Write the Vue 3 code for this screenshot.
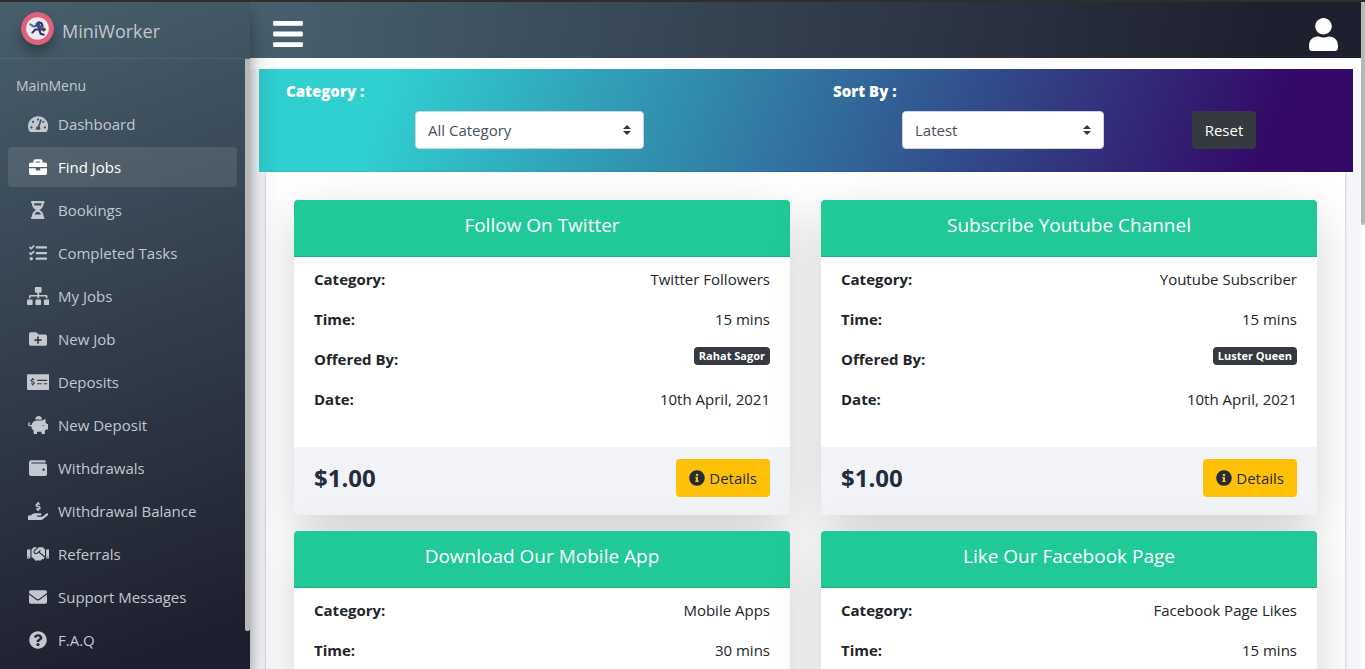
<script setup>
import { ref } from 'vue'

const icons = {
  dashboard: { w: 576, d: 'M288 32C128.94 32 0 160.94 0 320c0 52.8 14.25 102.26 39.06 144.8 5.61 9.62 16.3 15.2 27.44 15.2h443c11.14 0 21.83-5.58 27.44-15.2C561.75 422.26 576 372.8 576 320c0-159.06-128.94-288-288-288zm0 64c14.71 0 26.58 10.13 30.32 23.65-1.11 2.26-2.64 4.23-3.45 6.67l-9.22 27.67c-5.13 3.49-10.97 6.01-17.64 6.01-17.67 0-32-14.33-32-32S270.33 96 288 96zM96 384c-17.67 0-32-14.33-32-32s14.33-32 32-32 32 14.33 32 32-14.33 32-32 32zm48-160c-17.67 0-32-14.33-32-32s14.33-32 32-32 32 14.33 32 32-14.33 32-32 32zm246.77-72.41l-61.33 184C343.13 347.33 352 364.54 352 384c0 11.72-3.38 22.55-8.88 32H232.88c-5.5-9.45-8.88-20.28-8.88-32 0-33.94 26.5-61.43 59.9-63.59l61.34-184.01c4.17-12.56 17.73-19.45 30.36-15.17 12.57 4.19 19.35 17.79 15.17 30.36zm14.66 57.2l15.52-46.55c3.47-1.29 7.13-2.23 11.05-2.23 17.67 0 32 14.33 32 32s-14.33 32-32 32c-11.38-.01-20.89-6.28-26.57-15.22zM480 384c-17.67 0-32-14.33-32-32s14.33-32 32-32 32 14.33 32 32-14.33 32-32 32z' },
  briefcase: { w: 512, d: 'M320 336c0 8.84-7.16 16-16 16h-96c-8.84 0-16-7.16-16-16v-48H0v144c0 25.6 22.4 48 48 48h416c25.6 0 48-22.4 48-48V288H320v48zm144-208h-80V80c0-25.6-22.4-48-48-48H176c-25.6 0-48 22.4-48 48v48H48c-25.6 0-48 22.4-48 48v80h512v-80c0-25.6-22.4-48-48-48zm-144 0H192V96h128v32z' },
  hourglass: { w: 384, d: 'M360 0H24C10.745 0 0 10.745 0 24v16c0 13.255 10.745 24 24 24 0 90.965 51.016 167.734 120.842 192C75.016 280.266 24 357.035 24 448c-13.255 0-24 10.745-24 24v16c0 13.255 10.745 24 24 24h336c13.255 0 24-10.745 24-24v-16c0-13.255-10.745-24-24-24 0-90.965-51.016-167.734-120.842-192C308.984 231.734 360 154.965 360 64c13.255 0 24-10.745 24-24V24c0-13.255-10.745-24-24-24zm-75.078 384H99.08c17.059-46.797 52.096-80 92.92-80 40.821 0 75.862 33.196 92.922 80zm.019-256H99.078C91.988 108.548 88 86.748 88 64h208c0 22.805-3.987 44.587-11.059 64z' },
  tasks: { w: 512, d: 'M139.61 35.5a12 12 0 0 0-17 0L58.93 98.81l-22.7-22.12a12 12 0 0 0-17 0L3.53 92.41a12 12 0 0 0 0 17l47.59 47.4a12.78 12.78 0 0 0 17.61 0l15.59-15.62L156.52 69a12.09 12.09 0 0 0 .09-17zm0 159.19a12 12 0 0 0-17 0l-63.68 63.72-22.7-22.1a12 12 0 0 0-17 0L3.53 252a12 12 0 0 0 0 17L51 316.5a12.77 12.77 0 0 0 17.6 0l15.7-15.69 72.2-72.22a12 12 0 0 0 .09-16.9zM64 368c-26.49 0-48.59 21.5-48.59 48S37.53 464 64 464a48 48 0 0 0 0-96zm432 16H208a16 16 0 0 0-16 16v32a16 16 0 0 0 16 16h288a16 16 0 0 0 16-16v-32a16 16 0 0 0-16-16zm0-320H208a16 16 0 0 0-16 16v32a16 16 0 0 0 16 16h288a16 16 0 0 0 16-16V80a16 16 0 0 0-16-16zm0 160H208a16 16 0 0 0-16 16v32a16 16 0 0 0 16 16h288a16 16 0 0 0 16-16v-32a16 16 0 0 0-16-16z' },
  sitemap: { w: 640, d: 'M128 352H32c-17.67 0-32 14.33-32 32v96c0 17.67 14.33 32 32 32h96c17.67 0 32-14.33 32-32v-96c0-17.67-14.33-32-32-32zm-24-80h192v48h48v-48h192v48h48v-57.59c0-21.17-17.23-38.41-38.41-38.41H344v-64h40c17.67 0 32-14.33 32-32V32c0-17.67-14.33-32-32-32H256c-17.67 0-32 14.33-32 32v96c0 17.67 14.33 32 32 32h40v64H94.41C73.23 224 56 241.23 56 262.41V320h48v-48zm264 80h-96c-17.67 0-32 14.33-32 32v96c0 17.67 14.33 32 32 32h96c17.67 0 32-14.33 32-32v-96c0-17.67-14.33-32-32-32zm240 0h-96c-17.67 0-32 14.33-32 32v96c0 17.67 14.33 32 32 32h96c17.67 0 32-14.33 32-32v-96c0-17.67-14.33-32-32-32z' },
  folderPlus: { w: 512, d: 'M464,128H272L208,64H48A48,48,0,0,0,0,112V400a48,48,0,0,0,48,48H464a48,48,0,0,0,48-48V176A48,48,0,0,0,464,128ZM359.5,296a16,16,0,0,1-16,16h-64v64a16,16,0,0,1-16,16h-16a16,16,0,0,1-16-16V312h-64a16,16,0,0,1-16-16V280a16,16,0,0,1,16-16h64V200a16,16,0,0,1,16-16h16a16,16,0,0,1,16,16v64h64a16,16,0,0,1,16,16Z' },
  moneyCheck: { w: 640, d: 'M608 32H32C14.33 32 0 46.33 0 64v384c0 17.67 14.33 32 32 32h576c17.67 0 32-14.33 32-32V64c0-17.67-14.33-32-32-32zM176 327.88V344c0 4.42-3.58 8-8 8h-16c-4.42 0-8-3.58-8-8v-16.29c-11.29-.58-22.27-4.52-31.37-11.35-3.9-2.93-4.1-8.77-.57-12.14l11.75-11.21c2.77-2.64 6.89-2.76 10.13-.73 3.87 2.42 8.26 3.72 12.82 3.72h28.11c6.5 0 11.8-5.92 11.8-13.19 0-5.95-3.61-11.19-8.77-12.73l-45-13.5c-18.59-5.58-31.58-23.42-31.58-43.39 0-24.52 19.05-44.44 42.67-45.07V152c0-4.42 3.58-8 8-8h16c4.42 0 8 3.58 8 8v16.29c11.29.58 22.27 4.51 31.37 11.35 3.9 2.93 4.1 8.77.57 12.14l-11.75 11.21c-2.77 2.64-6.89 2.76-10.13.73-3.87-2.43-8.26-3.72-12.82-3.72h-28.11c-6.5 0-11.8 5.92-11.8 13.19 0 5.95 3.61 11.19 8.77 12.73l45 13.5c18.59 5.58 31.58 23.42 31.58 43.39 0 24.53-19.05 44.44-42.67 45.07zM416 312c0 4.42-3.58 8-8 8H296c-4.42 0-8-3.58-8-8v-16c0-4.42 3.58-8 8-8h112c4.42 0 8 3.58 8 8v16zm160 0c0 4.42-3.58 8-8 8h-80c-4.42 0-8-3.58-8-8v-16c0-4.42 3.58-8 8-8h80c4.42 0 8 3.58 8 8v16zm0-96c0 4.42-3.58 8-8 8H296c-4.42 0-8-3.58-8-8v-16c0-4.42 3.58-8 8-8h272c4.42 0 8 3.58 8 8v16z' },
  piggyBank: { w: 576, d: 'M560 224h-29.5c-8.8-20-21.6-37.7-37.4-52.5L512 96h-32c-29.4 0-55.4 13.5-73 34.3-7.6-1.1-15.1-2.3-23-2.3H256c-77.4 0-141.9 55-156.8 128H56c-14.8 0-26.5-13.5-23.5-28.8C34.7 215.8 45.4 208 57 208h1c3.3 0 6-2.7 6-6v-20c0-3.3-2.7-6-6-6-28.5 0-53.9 20.4-57.5 48.6C-3.9 258.8 22.7 288 56 288h40c0 52.2 25.4 98.1 64 127.3V496c0 8.8 7.2 16 16 16h64c8.8 0 16-7.2 16-16v-48h128v48c0 8.8 7.2 16 16 16h64c8.8 0 16-7.2 16-16v-80.7c11.8-8.9 22.3-19.4 31.3-31.3H560c8.8 0 16-7.2 16-16V240c0-8.8-7.2-16-16-16zm-128 64c-8.8 0-16-7.2-16-16s7.2-16 16-16 16 7.2 16 16-7.2 16-16 16zM256 96h128c5.4 0 10.7.4 15.9.8 0-.3.1-.5.1-.8 0-53-43-96-96-96s-96 43-96 96c0 2.1.5 4.1.6 6.2 15.2-3.9 31-6.2 47.4-6.2z' },
  wallet: { w: 512, d: 'M461.2 128H80c-8.84 0-16-7.16-16-16s7.16-16 16-16h384c8.84 0 16-7.16 16-16 0-26.51-21.49-48-48-48H64C28.65 32 0 60.65 0 96v320c0 35.35 28.65 64 64 64h397.2c28.02 0 50.8-21.53 50.8-48V176c0-26.47-22.78-48-50.8-48zM416 336c-17.67 0-32-14.33-32-32s14.33-32 32-32 32 14.33 32 32-14.33 32-32 32z' },
  handDollar: { w: 576, d: 'M257.6,144.3l50,14.3c3.6,1,6.1,4.4,6.1,8.1c0,4.6-3.8,8.4-8.4,8.4h-32.8c-3.6,0-7.1-0.8-10.3-2.2c-4.8-2.2-10.4-1.7-14.1,2l-17.5,17.5c-5.3,5.3-4.7,14.3,1.5,18.4c9.5,6.3,20.4,10.1,31.8,11.5V240c0,8.8,7.2,16,16,16h16c8.8,0,16-7.2,16-16v-17.6c30.3-3.6,53.3-31,49.3-63c-2.9-23-20.7-41.3-42.9-47.7l-50-14.3c-3.6-1-6.1-4.4-6.1-8.1c0-4.6,3.8-8.4,8.4-8.4h32.8c3.6,0,7.1,0.8,10.3,2.2c4.8,2.2,10.4,1.7,14.1-2l17.5-17.5c5.3-5.3,4.7-14.3-1.5-18.4c-9.5-6.3-20.4-10.1-31.8-11.5V16c0-8.8-7.2-16-16-16h-16c-8.8,0-16,7.2-16,16v17.6c-30.3,3.6-53.3,31-49.3,63C217.6,119.6,235.4,137.9,257.6,144.3zM565.3 328.1c-11.8-10.7-30.2-10-42.6 0L430.3 402c-11.3 9.1-25.4 14-40 14H272c-8.8 0-16-7.2-16-16s7.2-16 16-16h78.3c15.9 0 30.7-10.9 33.3-26.6 3.3-20-12.1-37.4-31.6-37.4H192c-27 0-53.1 9.3-74.1 26.3L71.4 384H16c-8.8 0-16 7.2-16 16v96c0 8.8 7.2 16 16 16h356.8c14.5 0 28.6-4.9 40-14L564 377c15.2-12.1 16.4-35.3 1.3-48.9z' },
  handshake: { w: 640, d: 'M434.7 64h-85.9c-8 0-15.7 3-21.6 8.4l-98.3 90c-.1.1-.2.3-.3.4-16.6 15.6-16.3 40.5-2.1 56 12.7 13.9 39.4 17.6 56.1 2.7.1-.1.3-.1.4-.2l79.9-73.2c6.5-5.9 16.7-5.5 22.6 1 6 6.5 5.5 16.6-1 22.6l-26.1 23.9L504 313.8c2.9 2.4 5.5 5 7.9 7.7V128l-54.6-54.6c-5.9-6-14.1-9.4-22.6-9.4zM544 128.2v223.9c0 17.7 14.3 32 32 32h64V128.2h-96zm48 223.9c-8.8 0-16-7.2-16-16s7.2-16 16-16 16 7.2 16 16-7.2 16-16 16zM0 384h64c17.7 0 32-14.3 32-32V128.2H0V384zm48-63.9c8.8 0 16 7.2 16 16s-7.2 16-16 16-16-7.2-16-16c0-8.9 7.2-16 16-16zm435.9 18.6L334.6 217.5l-30 27.5c-29.7 27.1-75.2 24.5-101.7-4.4-26.9-29.4-24.8-74.9 4.4-101.7L289.1 64h-83.8c-8.5 0-16.6 3.4-22.6 9.4L128 128v223.9h18.3l90.5 81.9c27.4 22.3 67.7 18.1 90-9.3l.2-.2 17.9 15.5c15.9 13 39.4 10.5 52.3-5.4l31.4-38.6 5.4 4.4c13.7 11.1 33.9 9.1 45-4.7l9.5-11.7c11.2-13.8 9.1-33.9-4.6-45.1z' },
  envelope: { w: 512, d: 'M502.3 190.8c3.9-3.1 9.7-.2 9.7 4.7V400c0 26.5-21.5 48-48 48H48c-26.5 0-48-21.5-48-48V195.6c0-5 5.7-7.8 9.7-4.7 22.4 17.4 52.1 39.5 154.1 113.6 21.1 15.4 56.7 47.8 92.2 47.6 35.7.3 72-32.8 92.3-47.6 102-74.1 131.6-96.3 154-113.7zM256 320c23.2.4 56.6-29.2 73.4-41.4 132.7-96.3 142.8-104.7 173.4-128.7 5.8-4.5 9.2-11.5 9.2-18.9v-19c0-26.5-21.5-48-48-48H48c-26.5 0-48 21.5-48 48v19c0 7.4 3.4 14.3 9.2 18.9 30.6 23.9 40.7 32.4 173.4 128.7 16.8 12.2 50.2 41.8 73.4 41.4z' },
  question: { w: 512, d: 'M504 256c0 136.997-111.043 248-248 248S8 392.997 8 256C8 119.083 119.043 8 256 8s248 111.083 248 248zM262.655 90c-54.497 0-89.255 22.957-116.549 63.758-3.536 5.286-2.353 12.415 2.715 16.258l34.699 26.31c5.205 3.947 12.621 3.008 16.665-2.122 17.864-22.658 30.113-35.797 57.303-35.797 20.429 0 45.698 13.148 45.698 32.958 0 14.976-12.363 22.667-32.534 33.976C247.128 238.528 216 254.941 216 296v4c0 6.627 5.373 12 12 12h56c6.627 0 12-5.373 12-12v-1.333c0-28.462 83.186-29.647 83.186-106.667 0-58.002-60.165-102-116.531-102zM256 338c-25.365 0-46 20.635-46 46 0 25.364 20.635 46 46 46s46-20.636 46-46c0-25.365-20.635-46-46-46z' },
}

const menu = [
  { label: 'Dashboard', icon: 'dashboard' },
  { label: 'Find Jobs', icon: 'briefcase', active: true },
  { label: 'Bookings', icon: 'hourglass' },
  { label: 'Completed Tasks', icon: 'tasks' },
  { label: 'My Jobs', icon: 'sitemap' },
  { label: 'New Job', icon: 'folderPlus' },
  { label: 'Deposits', icon: 'moneyCheck' },
  { label: 'New Deposit', icon: 'piggyBank' },
  { label: 'Withdrawals', icon: 'wallet' },
  { label: 'Withdrawal Balance', icon: 'handDollar' },
  { label: 'Referrals', icon: 'handshake' },
  { label: 'Support Messages', icon: 'envelope' },
  { label: 'F.A.Q', icon: 'question' },
]

const jobs = [
  { title: 'Follow On Twitter', category: 'Twitter Followers', time: '15 mins', by: 'Rahat Sagor', date: '10th April, 2021', price: '$1.00' },
  { title: 'Subscribe Youtube Channel', category: 'Youtube Subscriber', time: '15 mins', by: 'Luster Queen', date: '10th April, 2021', price: '$1.00' },
  { title: 'Download Our Mobile App', category: 'Mobile Apps', time: '30 mins' },
  { title: 'Like Our Facebook Page', category: 'Facebook Page Likes', time: '15 mins' },
]

const category = ref('All Category')
const sort = ref('Latest')

function reset() {
  category.value = 'All Category'
  sort.value = 'Latest'
}
</script>

<template>
  <div class="app">
    <aside class="sidebar">
      <a href="#" class="brand">
        <svg class="logo" viewBox="0 0 32 32" aria-hidden="true">
          <circle cx="16" cy="16" r="16" fill="#e0607e" />
          <circle cx="16" cy="16" r="11" fill="#eceaf0" />
          <path d="M9 12l3 2 4-1" fill="none" stroke="#2f7f96" stroke-width="2" stroke-linecap="round" stroke-linejoin="round" />
          <path d="M16 12l3 4" stroke="#3b4a8c" stroke-width="4" stroke-linecap="round" />
          <path d="M17 17l-3 0-3 3M18 18l1 3 3 1M17 10l3 1 1 3" fill="none" stroke="#35306b" stroke-width="2" stroke-linecap="round" stroke-linejoin="round" />
          <circle cx="22" cy="17" r="2" fill="#4a4a30" />
        </svg>
        <span>MiniWorker</span>
      </a>
      <nav class="menu" aria-label="Main menu">
        <h2 class="menu-title">MainMenu</h2>
        <ul>
          <li v-for="m in menu" :key="m.label">
            <a href="#" :class="{ active: m.active }">
              <span class="icon">
                <svg :viewBox="`0 0 ${icons[m.icon].w} 512`" aria-hidden="true"><path :d="icons[m.icon].d" /></svg>
              </span>
              <span>{{ m.label }}</span>
            </a>
          </li>
        </ul>
      </nav>
      <div class="side-thumb"></div>
    </aside>

    <div class="page">
      <header class="topbar">
        <button type="button" class="icon-btn" aria-label="Toggle menu">
          <svg class="bars" viewBox="0 0 448 512"><path d="M16 132h416c8.837 0 16-7.163 16-16V76c0-8.837-7.163-16-16-16H16C7.163 60 0 67.163 0 76v40c0 8.837 7.163 16 16 16zm0 160h416c8.837 0 16-7.163 16-16v-40c0-8.837-7.163-16-16-16H16c-8.837 0-16 7.163-16 16v40c0 8.837 7.163 16 16 16zm0 160h416c8.837 0 16-7.163 16-16v-40c0-8.837-7.163-16-16-16H16c-8.837 0-16 7.163-16 16v40c0 8.837 7.163 16 16 16z" /></svg>
        </button>
        <button type="button" class="icon-btn" aria-label="Account">
          <svg class="user" viewBox="0 0 448 512"><path d="M224 256c70.7 0 128-57.3 128-128S294.7 0 224 0 96 57.3 96 128s57.3 128 128 128zm89.6 32h-16.7c-22.2 10.2-46.9 16-72.9 16s-50.6-5.8-72.9-16h-16.7C60.2 288 0 348.2 0 422.4V464c0 26.5 21.5 48 48 48h352c26.5 0 48-21.5 48-48v-41.6c0-74.2-60.2-134.4-134.4-134.4z" /></svg>
        </button>
      </header>

      <main class="content">
        <form class="filters" @submit.prevent>
          <div class="filter">
            <label for="category">Category :</label>
            <div class="fields category-fields">
              <div class="select">
                <select id="category" v-model="category">
                  <option>All Category</option>
                  <option v-for="j in jobs" :key="j.category">{{ j.category }}</option>
                </select>
                <svg viewBox="0 0 8 10" aria-hidden="true"><path d="M4 0l4 4H0zM4 10L0 6h8z" /></svg>
              </div>
            </div>
          </div>
          <div class="filter">
            <label for="sort">Sort By :</label>
            <div class="fields sort-fields">
              <div class="select">
                <select id="sort" v-model="sort">
                  <option>Latest</option>
                  <option>Oldest</option>
                </select>
                <svg viewBox="0 0 8 10" aria-hidden="true"><path d="M4 0l4 4H0zM4 10L0 6h8z" /></svg>
              </div>
              <button type="button" class="reset" @click="reset">Reset</button>
            </div>
          </div>
        </form>

        <section class="panel">
          <article v-for="j in jobs" :key="j.title" class="card">
            <h3>{{ j.title }}</h3>
            <dl>
              <div><dt>Category:</dt><dd>{{ j.category }}</dd></div>
              <div><dt>Time:</dt><dd>{{ j.time }}</dd></div>
              <div v-if="j.by"><dt>Offered By:</dt><dd><span class="badge">{{ j.by }}</span></dd></div>
              <div v-if="j.date"><dt>Date:</dt><dd>{{ j.date }}</dd></div>
            </dl>
            <footer v-if="j.price">
              <strong>{{ j.price }}</strong>
              <a href="#" class="details">
                <svg viewBox="0 0 512 512" aria-hidden="true"><path d="M256 8C119.043 8 8 119.083 8 256c0 136.997 111.043 248 248 248s248-111.003 248-248C504 119.083 392.957 8 256 8zm0 110c23.196 0 42 18.804 42 42s-18.804 42-42 42-42-18.804-42-42 18.804-42 42-42zm56 254c0 6.627-5.373 12-12 12h-88c-6.627 0-12-5.373-12-12v-24c0-6.627 5.373-12 12-12h12v-64h-12c-6.627 0-12-5.373-12-12v-24c0-6.627 5.373-12 12-12h64c6.627 0 12 5.373 12 12v100h12c6.627 0 12 5.373 12 12v24z" /></svg>
                <span>Details</span>
              </a>
            </footer>
          </article>
        </section>
      </main>
    </div>
    <div class="page-rail"><div class="page-thumb"></div></div>
  </div>
</template>

<style>
body {
  margin: 0;
}
</style>

<style scoped>
* {
  box-sizing: border-box;
}

.app {
  display: flex;
  height: 100vh;
  overflow: hidden;
  border-top: 2px solid #2e2e30;
  background: #fff;
  color: #212529;
  font: 400 15px/24px "Open Sans", "Noto Sans", sans-serif;
}

a {
  color: inherit;
  text-decoration: none;
}

/* Sidebar */
.sidebar {
  position: relative;
  z-index: 2;
  flex: 0 0 250px;
  background: linear-gradient(160deg, #485f6c 0%, #1e1f2e 94%);
  box-shadow: 0 14px 28px rgba(0, 0, 0, 0.25), 0 10px 10px rgba(0, 0, 0, 0.22);
  color: #c2c7d0;
}

.brand {
  display: flex;
  gap: 8px;
  height: 57px;
  padding: 10px 16px 0 21px;
  border-bottom: 1px solid rgba(255, 255, 255, 0.08);
  font-size: 18px;
  line-height: 38px;
}

.logo {
  width: 33px;
  height: 33px;
  border-radius: 50%;
  box-shadow: 0 8px 12px rgba(0, 0, 0, 0.3);
}

.menu {
  padding: 15px 13px 0 8px;
}

.menu-title {
  margin: 0;
  padding: 0 8px;
  font-size: 14px;
  font-weight: 400;
  line-height: 24px;
}

.menu ul {
  display: grid;
  gap: 3px;
  margin: 6px 0 0;
  padding: 0;
  list-style: none;
}

.menu a {
  display: flex;
  align-items: center;
  gap: 6px;
  height: 40px;
  padding: 0 16px;
  border-radius: 4px;
}

.menu a.active {
  background: rgba(255, 255, 255, 0.1);
  color: #fff;
}

.icon {
  display: flex;
  justify-content: center;
  width: 28px;
}

.icon svg {
  height: 18px;
  fill: currentColor;
}

.side-thumb {
  position: absolute;
  top: 57px;
  right: 0;
  width: 5px;
  height: 572px;
  border-radius: 0 0 2px 2px;
  background: #b8b8b8;
}

/* Top bar */
.page {
  display: flex;
  flex: 1;
  flex-direction: column;
  min-width: 0;
  background: #f4f6f9;
}

.topbar {
  display: flex;
  flex: none;
  align-items: center;
  justify-content: space-between;
  height: 56px;
  padding: 8px 23px 0;
  background: linear-gradient(100deg, #48616e 0%, #1e1f2e 92%);
}

.icon-btn {
  display: flex;
  padding: 0;
  border: 0;
  background: none;
  color: #fff;
}

.icon-btn svg {
  fill: currentColor;
}

.bars {
  width: 30px;
  height: 34px;
}

.user {
  width: 29px;
  height: 33px;
}

/* Filters */
.content {
  display: flex;
  flex: 1;
  flex-direction: column;
  min-height: 0;
  overflow-y: auto;
  scrollbar-width: none;
}

.filters {
  display: grid;
  flex: none;
  grid-template-columns: 1fr 1fr;
  padding: 0 8px 0 9px;
  border-top: 11px solid #fff;
  background: linear-gradient(110deg, #30cfd0 12%, #330867 92%) content-box;
  color: #fff;
}

.filter {
  padding: 10px 0 23px 27px;
}

.filter label {
  display: block;
  font-weight: 800;
}

.fields {
  display: grid;
  margin-top: 8px;
}

.category-fields {
  grid-template-columns: 129fr 229fr 162fr;
}

.sort-fields {
  grid-template-columns: 69fr 202fr 88fr 64px 97fr;
}

.select {
  position: relative;
  grid-column: 2;
}

.select select {
  width: 100%;
  height: 38px;
  padding: 0 28px 0 12px;
  border: 1px solid #ced4da;
  border-radius: 4px;
  appearance: none;
  background: #fff;
  color: #495057;
  font: inherit;
}

.select svg {
  position: absolute;
  top: 14px;
  right: 13px;
  width: 8px;
  height: 10px;
  fill: #343a40;
  pointer-events: none;
}

.reset {
  grid-column: 4;
  height: 38px;
  padding: 0;
  border: 0;
  border-radius: 4px;
  background: #343a40;
  color: #fff;
  font: inherit;
}

/* Job cards */
.panel {
  display: grid;
  flex: 1 0 auto;
  grid-template-columns: 1fr 1fr;
  align-content: start;
  gap: 16px 31px;
  margin: 0 16px;
  padding: 28px;
  overflow: hidden;
  background: #fff;
  box-shadow: 0 0 1px rgba(0, 0, 0, 0.13), 0 1px 3px rgba(0, 0, 0, 0.2);
}

.card {
  border-radius: 4px;
  background: #fff;
  box-shadow: 0 16px 48px rgba(0, 0, 0, 0.175);
}

.card h3 {
  height: 57px;
  margin: 0;
  padding: 12px 20px;
  border-bottom: 1px solid rgba(0, 0, 0, 0.13);
  border-radius: 4px 4px 0 0;
  background: #20c997;
  color: #fff;
  font-size: 19px;
  font-weight: 400;
  line-height: 26px;
  text-align: center;
}

.card dl {
  height: 190px;
  margin: 0;
  padding: 10px 20px;
}

.card dl div {
  display: flex;
  justify-content: space-between;
  height: 40px;
}

.card dt {
  font-weight: 700;
}

.card dd {
  margin: 0;
}

.badge {
  display: block;
  padding: 3px 5px;
  border-radius: 4px;
  background: #343a40;
  color: #fff;
  font-size: 11px;
  font-weight: 700;
  line-height: 12px;
}

.card footer {
  display: flex;
  justify-content: space-between;
  height: 68px;
  padding: 12px 20px;
  background: #f2f3f6;
}

.card strong {
  color: #1f2d3d;
  font-size: 24px;
  line-height: 38px;
}

.details {
  display: flex;
  align-items: center;
  gap: 4px;
  height: 38px;
  padding: 0 13px;
  border-radius: 4px;
  background: #ffc107;
  color: #1f2d3d;
}

.details svg {
  width: 16px;
  height: 16px;
  fill: currentColor;
}

/* Page scrollbar */
.page-rail {
  flex: 0 0 4px;
  background: #fff;
}

.page-thumb {
  height: 223px;
  border-radius: 0 0 2px 2px;
  background: #b8b8b8;
}
</style>
